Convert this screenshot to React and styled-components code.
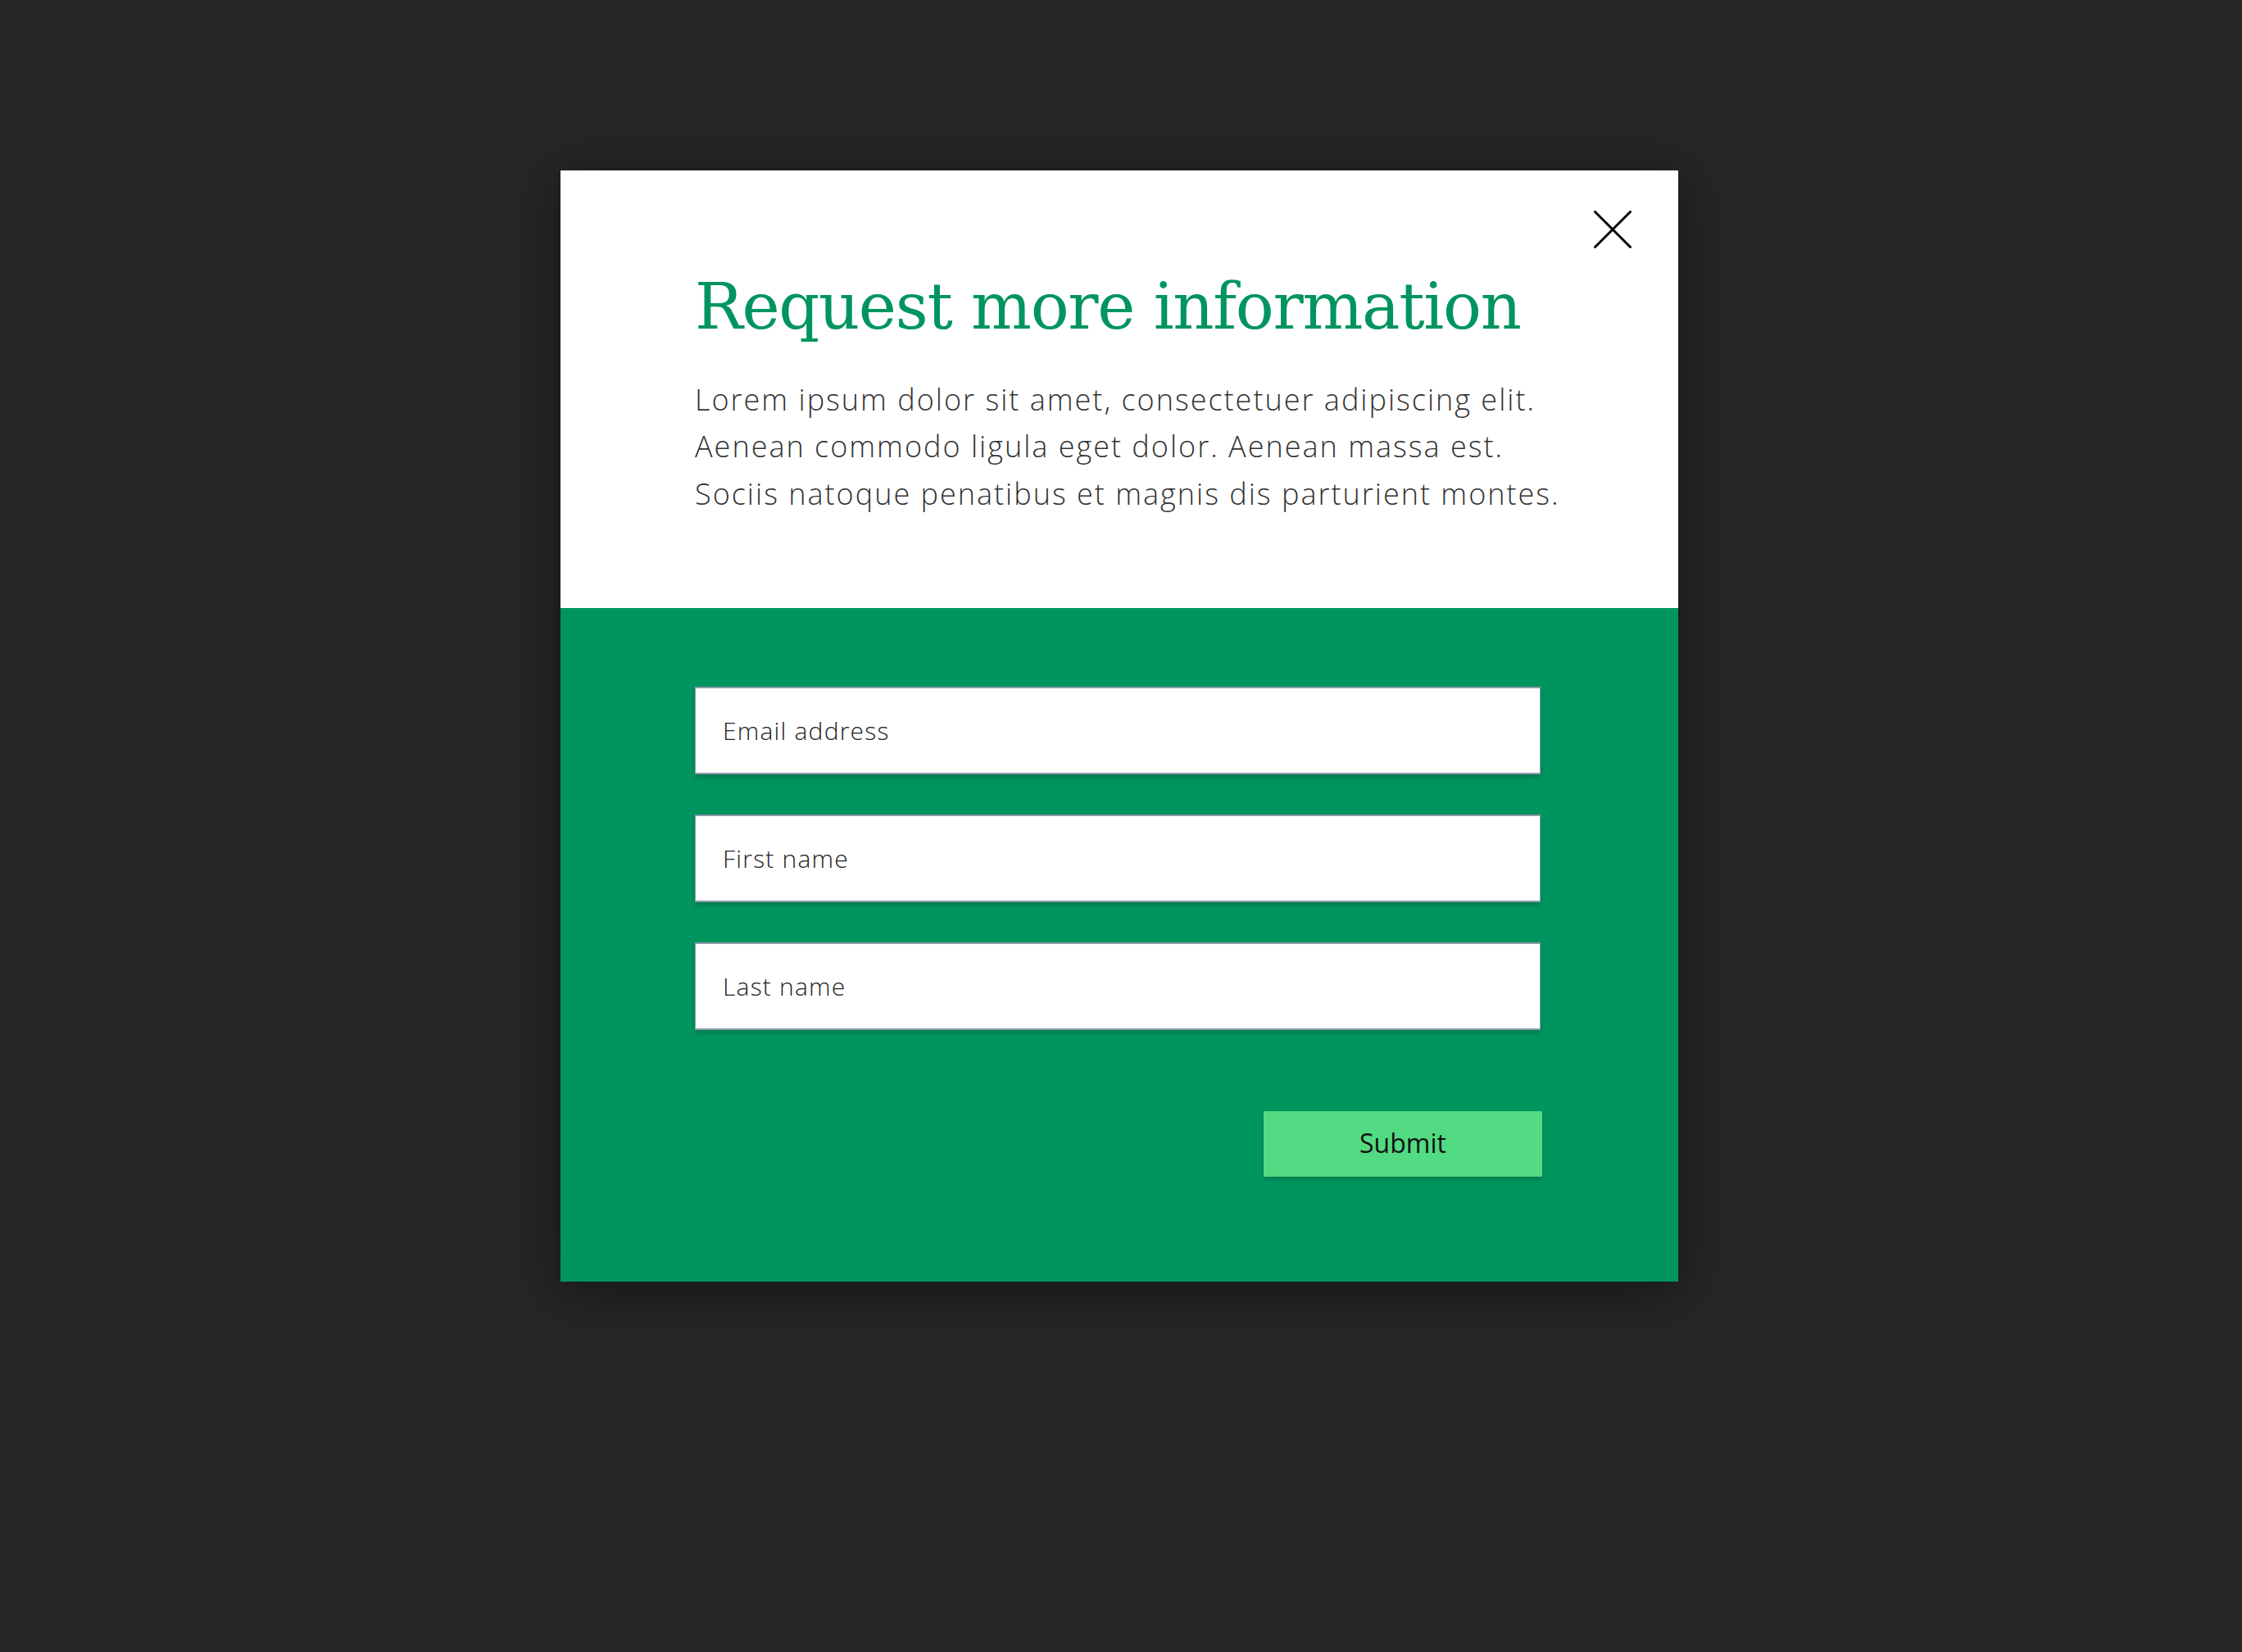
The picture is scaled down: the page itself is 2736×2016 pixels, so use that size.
import styled, { createGlobalStyle } from "styled-components";

const GlobalStyle = createGlobalStyle`
  html, body {
    margin: 0;
    padding: 0;
    background: #262626;
  }
  * {
    box-sizing: border-box;
  }
`;

const Page = styled.div`
  width: 2736px;
  height: 2016px;
  background: #262626;
  padding: 208px 0 0 684px;
  display: flex;
  align-items: flex-start;
`;

const Modal = styled.div`
  width: 1364px;
  display: flex;
  flex-direction: column;
  position: relative;
  box-shadow: 0 10px 60px rgba(0, 0, 0, 0.45);
`;

const Intro = styled.div`
  background: #ffffff;
  height: 534px;
  padding: 118px 164px 0 164px;
`;

const CloseButton = styled.button`
  position: absolute;
  top: 49px;
  right: 57px;
  width: 46px;
  height: 46px;
  padding: 0;
  border: none;
  background: none;
  cursor: pointer;
  display: flex;
`;

const Title = styled.h1`
  margin: 0;
  font-family: "DejaVu Serif", "Liberation Serif", serif;
  font-weight: 400;
  font-size: 78px;
  line-height: 96.8px;
  color: #00955f;
  letter-spacing: -1.3px;
  white-space: nowrap;
`;

const Lead = styled.p`
  margin: 36px 0 0 0;
  font-family: "Open Sans", "Lato", sans-serif;
  font-weight: 300;
  font-size: 36px;
  line-height: 57.6px;
  letter-spacing: 2px;
  color: #333333;
  white-space: nowrap;
`;

const FormArea = styled.form`
  background: #00955f;
  padding: 96px 0 128px 164px;
  display: flex;
  flex-direction: column;
  width: 1364px;
`;

const Fields = styled.div`
  width: 1034px;
  display: flex;
  flex-direction: column;
  gap: 49px;
`;

const Field = styled.input`
  width: 1032px;
  height: 107px;
  padding: 0 33px;
  border: 2px solid #8e9aaf;
  border-left-width: 1px;
  border-right-width: 1px;
  background: #ffffff;
  box-shadow: 0 4px 6px rgba(0, 0, 0, 0.18);
  font-family: "Open Sans", "Lato", sans-serif;
  font-weight: 300;
  font-size: 30px;
  letter-spacing: 1.2px;
  color: #222;
  outline: none;

  &::placeholder {
    color: #222222;
    opacity: 1;
  }
`;

const Actions = styled.div`
  margin-top: 99px;
  display: flex;
  justify-content: flex-end;
`;

const SubmitButton = styled.button`
  width: 340px;
  height: 80px;
  padding: 0 0 4px 0;
  border: none;
  background: #52db82;
  box-shadow: 0 3px 5px rgba(0, 0, 0, 0.2);
  font-family: "Open Sans", "Lato", sans-serif;
  font-weight: 500;
  font-size: 32px;
  color: #111;
  cursor: pointer;
`;

const CloseIcon = () => (
  <svg width="46" height="46" viewBox="0 0 46 46" fill="none">
    <path
      d="M1.5 1.5 L44.5 44.5 M44.5 1.5 L1.5 44.5"
      stroke="#000"
      strokeWidth="3"
      strokeLinecap="round"
    />
  </svg>
);

export default function App() {
  return (
    <>
      <GlobalStyle />
      <Page>
        <Modal>
          <CloseButton aria-label="Close">
            <CloseIcon />
          </CloseButton>
          <Intro>
            <Title>Request more information</Title>
            <Lead>
              Lorem ipsum dolor sit amet, consectetuer adipiscing elit.
              <br />
              Aenean commodo ligula eget dolor. Aenean massa est.
              <br />
              Sociis natoque penatibus et magnis dis parturient montes.
            </Lead>
          </Intro>
          <FormArea onSubmit={(e) => e.preventDefault()}>
            <Fields>
              <Field type="email" placeholder="Email address" />
              <Field type="text" placeholder="First name" />
              <Field type="text" placeholder="Last name" />
            </Fields>
            <Fields>
              <Actions>
                <SubmitButton type="submit">Submit</SubmitButton>
              </Actions>
            </Fields>
          </FormArea>
        </Modal>
      </Page>
    </>
  );
}
